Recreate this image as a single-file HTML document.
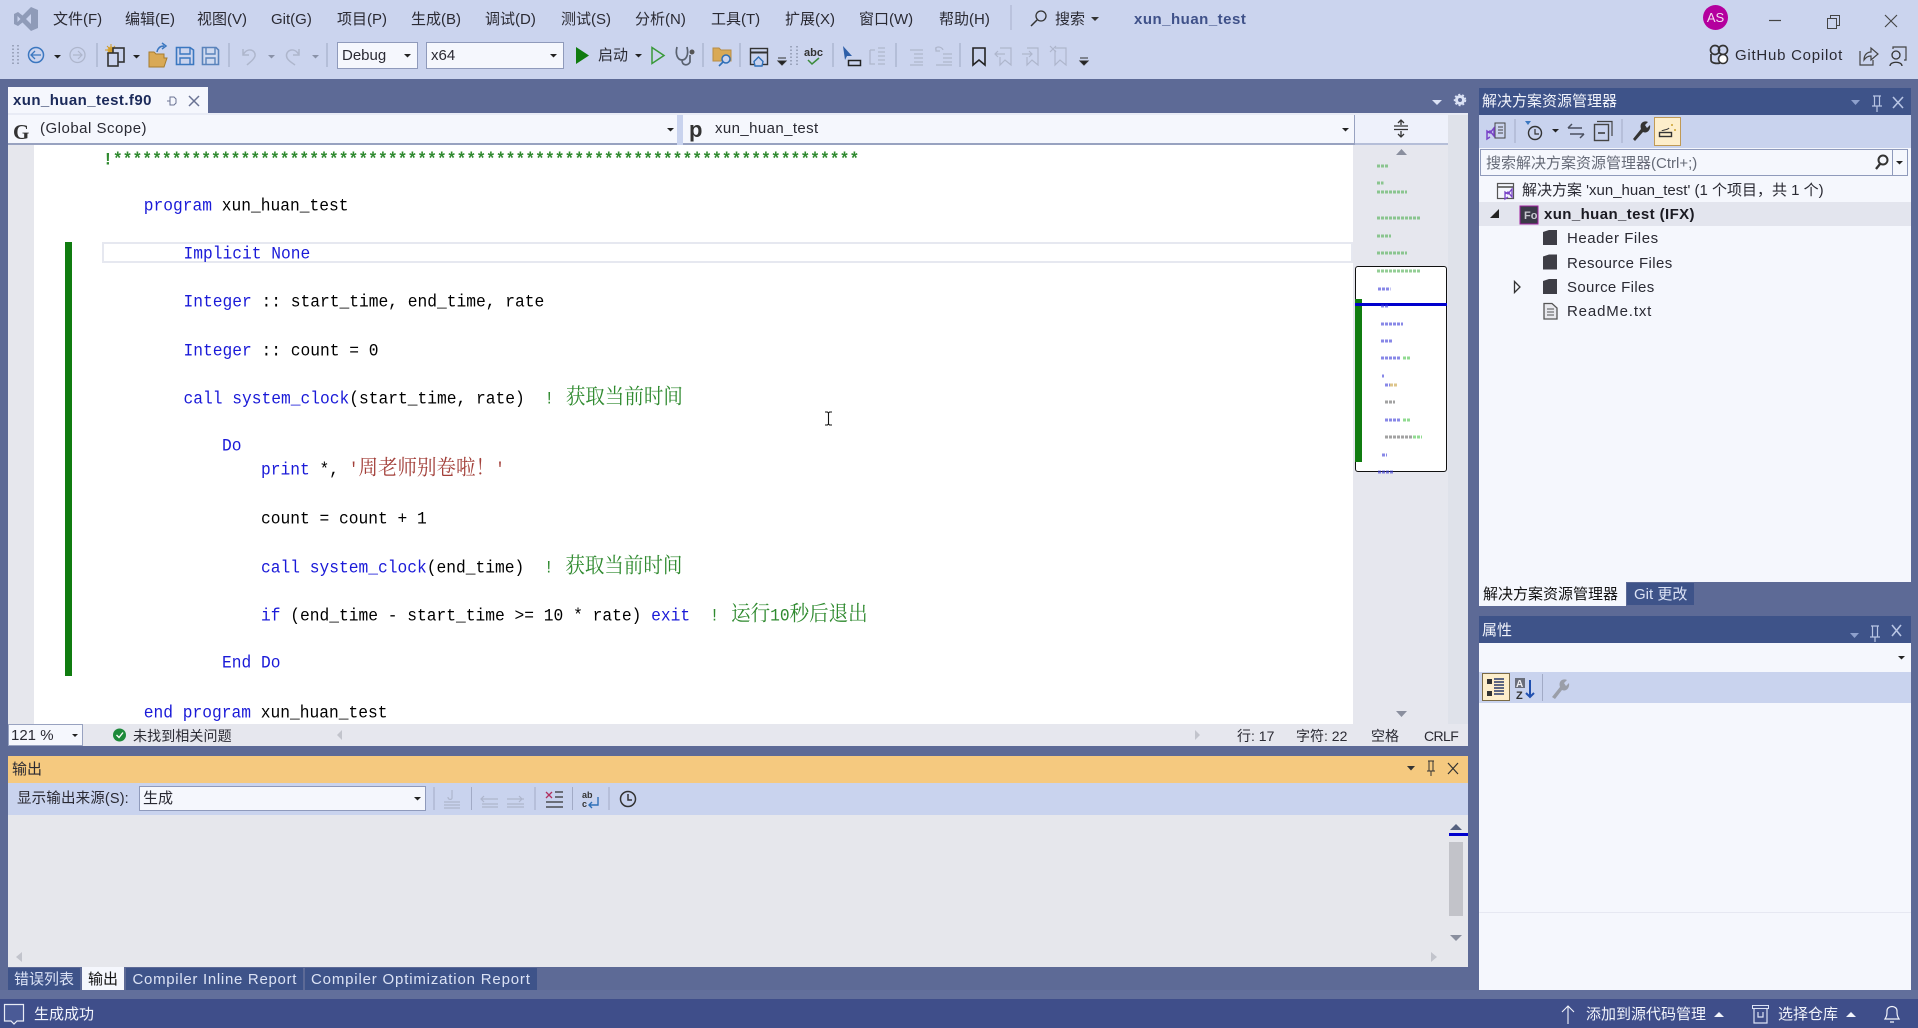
<!DOCTYPE html>
<html lang="zh"><head><meta charset="utf-8"><title>xun_huan_test</title>
<style>
html,body{margin:0;padding:0}
body{width:1918px;height:1028px;position:relative;overflow:hidden;background:#5d6a96;font-family:"Liberation Sans","Noto Sans CJK SC",sans-serif;font-size:15px;color:#222;filter:blur(.3px)}
.b{position:absolute}
.t{position:absolute;white-space:pre;height:20px;line-height:20px;color:#2a2a33}
.c{position:absolute;white-space:pre;height:24px;line-height:24px;font-family:"Liberation Mono","Noto Serif CJK SC",monospace;font-size:16.25px;color:#000;transform:scaleY(1.08)}
.c .k{color:#1a1ad8}.c .g{color:#2f8a2f}.c .s{color:#a3403a}
.c i{font-style:normal;font-family:"Noto Serif CJK SC",serif;font-size:19.5px;line-height:20px}
.c .g i{margin-left:2px}
svg{position:absolute;left:0;top:0}
</style></head><body>
<!-- regions -->
<div class="b" style="left:0;top:0;width:1918px;height:79px;background:#cbd4ee"></div>
<div class="b" style="left:0;top:990px;width:1918px;height:9px;background:#626f9b"></div>
<div class="b" style="left:0;top:999px;width:1918px;height:29px;background:#3f4e8a"></div>
<!-- editor -->
<div class="b" style="left:8px;top:87px;width:200px;height:26px;background:#f5f7fd"></div>
<div class="b" style="left:8px;top:113px;width:1460px;height:2px;background:#e8ebf5"></div>
<div class="b" style="left:8px;top:115px;width:669px;height:28px;background:#f5f7fd;border-bottom:2px solid #98a2c0;box-sizing:content-box"></div>
<div class="b" style="left:677px;top:115px;width:6px;height:30px;background:#c9d3ee"></div>
<div class="b" style="left:683px;top:115px;width:671px;height:28px;background:#f5f7fd;border-bottom:2px solid #98a2c0;border-right:1px solid #98a2c0"></div>
<div class="b" style="left:1355px;top:115px;width:93px;height:28px;background:#eef1fb;border-bottom:2px solid #b5bed8"></div>
<div class="b" style="left:1448px;top:115px;width:20px;height:631px;background:#dfe2ea"></div>
<div class="b" style="left:8px;top:145px;width:1347px;height:579px;background:#fff"></div>
<div class="b" style="left:8px;top:145px;width:26px;height:579px;background:#e6e7ed"></div>
<div class="b" style="left:1353px;top:145px;width:95px;height:579px;background:#e6e7ee"></div>
<div class="b" style="left:65px;top:242px;width:7px;height:434px;background:#107c10"></div>
<div class="b" style="left:102px;top:242px;width:1251px;height:21px;border:2px solid #e6e8f0;box-sizing:border-box"></div>
<!-- editor status -->
<div class="b" style="left:8px;top:724px;width:1460px;height:22px;background:#e6e7ee"></div>
<div class="b" style="left:8px;top:724px;width:75px;height:22px;background:#f5f7fd;border:1px solid #98a2c0;box-sizing:border-box"></div>
<!-- scroll map box -->
<div class="b" style="left:1355px;top:266px;width:92px;height:206px;background:#fff;border:1.5px solid #111;border-radius:3px;box-sizing:border-box"></div>
<div class="b" style="left:1355px;top:299px;width:7px;height:163px;background:#107c10"></div>
<div class="b" style="left:1355px;top:303px;width:92px;height:3px;background:#0000cd"></div>
<!-- output -->
<div class="b" style="left:8px;top:756px;width:1460px;height:27px;background:#f5c97f"></div>
<div class="b" style="left:8px;top:783px;width:1460px;height:32px;background:#c9d3ee"></div>
<div class="b" style="left:8px;top:815px;width:1460px;height:152px;background:#e6e7ec"></div>
<div class="b" style="left:139px;top:786px;width:287px;height:25px;background:#f5f7fd;border:1px solid #8f9abb;box-sizing:border-box"></div>
<div class="b" style="left:1449px;top:842px;width:14px;height:74px;background:#c2c3c9"></div>
<div class="b" style="left:1449px;top:833px;width:19px;height:3px;background:#0000cd"></div>
<!-- bottom tabs -->
<div class="b" style="left:8px;top:968px;width:72px;height:22px;background:#3e5389"></div>
<div class="b" style="left:82px;top:967px;width:42px;height:23px;background:#f5f7fd"></div>
<div class="b" style="left:126px;top:968px;width:177px;height:22px;background:#3e5389"></div>
<div class="b" style="left:305px;top:968px;width:232px;height:22px;background:#3e5389"></div>
<!-- toolbar combos -->
<div class="b" style="left:337px;top:42px;width:81px;height:27px;background:#f5f7fd;border:1px solid #8f9abb;box-sizing:border-box"></div>
<div class="b" style="left:426px;top:42px;width:138px;height:27px;background:#f5f7fd;border:1px solid #8f9abb;box-sizing:border-box"></div>
<!-- solution explorer -->
<div class="b" style="left:1479px;top:88px;width:432px;height:27px;background:#3e5389"></div>
<div class="b" style="left:1479px;top:115px;width:432px;height:33px;background:#c9d3ee"></div>
<div class="b" style="left:1479px;top:148px;width:432px;height:434px;background:#f5f7fd"></div>
<div class="b" style="left:1480px;top:149px;width:428px;height:27px;background:#f5f7fd;border:1px solid #8f9abb;box-sizing:border-box"></div>
<div class="b" style="left:1892px;top:149px;width:1px;height:27px;background:#8f9abb"></div>
<div class="b" style="left:1479px;top:202px;width:432px;height:24px;background:#e3e5ee"></div>
<div class="b" style="left:1654px;top:117px;width:27px;height:29px;background:#fdeecb;border:1px solid #c09a55;box-sizing:border-box"></div>
<div class="b" style="left:1479px;top:582px;width:147px;height:24px;background:#f5f7fd"></div>
<div class="b" style="left:1627px;top:583px;width:67px;height:22px;background:#3e5389"></div>
<!-- properties -->
<div class="b" style="left:1479px;top:616px;width:432px;height:27px;background:#3e5389"></div>
<div class="b" style="left:1479px;top:643px;width:432px;height:347px;background:#f5f7fd"></div>
<div class="b" style="left:1479px;top:672px;width:432px;height:31px;background:#c9d3ee"></div>
<div class="b" style="left:1479px;top:912px;width:432px;height:1px;background:#e6e8f2"></div>
<div class="b" style="left:1482px;top:673px;width:28px;height:28px;background:#fdeecb;border:1px solid #7a6a45;box-sizing:border-box"></div>

<!-- menu -->
<div class="t" style="left:53px;top:10px">文件(F)</div>
<div class="t" style="left:125px;top:10px">编辑(E)</div>
<div class="t" style="left:197px;top:10px">视图(V)</div>
<div class="t" style="left:271px;top:10px">Git(G)</div>
<div class="t" style="left:337px;top:10px">项目(P)</div>
<div class="t" style="left:411px;top:10px">生成(B)</div>
<div class="t" style="left:485px;top:10px">调试(D)</div>
<div class="t" style="left:561px;top:10px">测试(S)</div>
<div class="t" style="left:635px;top:10px">分析(N)</div>
<div class="t" style="left:711px;top:10px">工具(T)</div>
<div class="t" style="left:785px;top:10px">扩展(X)</div>
<div class="t" style="left:859px;top:10px">窗口(W)</div>
<div class="t" style="left:939px;top:10px">帮助(H)</div>
<div class="t" style="left:1055px;top:10px">搜索</div>
<div class="t" style="left:1134px;top:10px;font-weight:700;color:#3f5189;letter-spacing:.5px;font-size:15px">xun_huan_test</div>
<div class="b" style="left:1703px;top:5px;width:25px;height:25px;border-radius:50%;background:#b4009e;color:#f4e0f0;font-size:13px;line-height:25px;text-align:center">AS</div>
<div class="t" style="left:342px;top:46px">Debug</div>
<div class="t" style="left:431px;top:46px">x64</div>
<div class="t" style="left:598px;top:46px">启动</div>
<div class="t" style="left:1735px;top:46px;letter-spacing:.75px">GitHub Copilot</div>
<!-- tab + nav -->
<div class="t" style="left:13px;top:91px;font-weight:700;color:#1b2a5a;letter-spacing:.42px">xun_huan_test.f90</div>
<div class="b" style="left:13px;top:120px;font:700 21px/24px 'Liberation Serif',serif;color:#333">G</div>
<div class="t" style="left:40px;top:119px;letter-spacing:.5px">(Global Scope)</div>
<div class="b" style="left:689px;top:117px;font:700 22px/26px 'Liberation Sans',sans-serif;color:#333">p</div>
<div class="t" style="left:715px;top:119px;letter-spacing:.4px">xun_huan_test</div>

<!-- code -->
<div class="c" style="left:103px;top:148px;letter-spacing:.07px;font-weight:700"><span class="g">!****************************************************************************</span></div>
<div class="c" style="left:143.7px;top:194px"><span class="k">program</span> xun_huan_test</div>
<div class="c" style="left:183.5px;top:242px"><span class="k">Implicit None</span></div>
<div class="c" style="left:183.5px;top:290px"><span class="k">Integer</span> :: start_time, end_time, rate</div>
<div class="c" style="left:183.5px;top:339px"><span class="k">Integer</span> :: count = 0</div>
<div class="c" style="left:183.5px;top:385px"><span class="k">call system_clock</span>(start_time, rate)  <span class="g">! <i>获取当前时间</i></span></div>
<div class="c" style="left:222px;top:434px"><span class="k">Do</span></div>
<div class="c" style="left:261px;top:456px"><span class="k">print</span> *, <span class="s">'<i>周老师别卷啦！</i>'</span></div>
<div class="c" style="left:261px;top:507px">count = count + 1</div>
<div class="c" style="left:261px;top:554px"><span class="k">call system_clock</span>(end_time)  <span class="g">! <i>获取当前时间</i></span></div>
<div class="c" style="left:261px;top:602px"><span class="k">if</span> (end_time - start_time &gt;= 10 * rate) <span class="k">exit</span>  <span class="g">! <i>运行</i>10<i style="margin-left:0">秒后退出</i></span></div>
<div class="c" style="left:222px;top:651px"><span class="k">End Do</span></div>
<div class="c" style="left:143.7px;top:701px"><span class="k">end program</span> xun_huan_test</div>

<!-- editor status -->
<div class="t" style="left:11px;top:726px">121 %</div>
<div class="t" style="left:133px;top:726px;font-size:14px;letter-spacing:.1px">未找到相关问题</div>
<div class="t" style="left:1237px;top:726px;font-size:14px">行: 17</div>
<div class="t" style="left:1296px;top:726px;font-size:14px">字符: 22</div>
<div class="t" style="left:1371px;top:726px;font-size:14px">空格</div>
<div class="t" style="left:1424px;top:726px;font-size:14px;letter-spacing:-.6px">CRLF</div>
<!-- output text -->
<div class="t" style="left:12px;top:760px">输出</div>
<div class="t" style="left:17px;top:789px;font-size:14.5px;letter-spacing:.15px">显示输出来源(S):</div>
<div class="t" style="left:143px;top:789px">生成</div>
<!-- tabs text -->
<div class="t" style="left:14px;top:970px;color:#dbe2f5">错误列表</div>
<div class="t" style="left:88px;top:970px;color:#111">输出</div>
<div class="t" style="left:132.5px;top:970px;color:#dbe2f5;letter-spacing:.7px">Compiler Inline Report</div>
<div class="t" style="left:311px;top:970px;color:#dbe2f5;letter-spacing:.82px">Compiler Optimization Report</div>
<!-- status -->
<div class="t" style="left:34px;top:1005px;color:#f2f4fb">生成成功</div>
<div class="t" style="left:1586px;top:1005px;color:#f2f4fb">添加到源代码管理</div>
<div class="t" style="left:1778px;top:1005px;color:#f2f4fb">选择仓库</div>
<!-- solution explorer text -->
<div class="t" style="left:1482px;top:92px;color:#f2f4fb">解决方案资源管理器</div>
<div class="t" style="left:1486px;top:154px;color:#666b78;font-size:15px">搜索解决方案资源管理器(Ctrl+;)</div>
<div class="t" style="left:1522px;top:181px">解决方案 'xun_huan_test' (1 个项目，共 1 个)</div>
<div class="t" style="left:1544px;top:205px;font-weight:700;color:#1a1a22;letter-spacing:.4px">xun_huan_test (IFX)</div>
<div class="t" style="left:1567px;top:229px;letter-spacing:.55px">Header Files</div>
<div class="t" style="left:1567px;top:254px;letter-spacing:.4px">Resource Files</div>
<div class="t" style="left:1567px;top:278px;letter-spacing:.35px">Source Files</div>
<div class="t" style="left:1567px;top:302px;letter-spacing:.85px">ReadMe.txt</div>
<div class="t" style="left:1483px;top:585px;color:#111">解决方案资源管理器</div>
<div class="t" style="left:1634px;top:585px;color:#dbe2f5">Git 更改</div>
<div class="t" style="left:1482px;top:621px;color:#f2f4fb">属性</div>

<svg width="1918" height="1028" viewBox="0 0 1918 1028" fill="none">
<!-- VS logo -->
<path d="M31 7L38 10V28L31 31L22.5 22.5L18 26L14 24V14L18 12L22.5 15.5Z" fill="#8f9bb8"/>
<path d="M31 14L26 19L31 24Z" fill="#cbd4ee"/><path d="M17.5 16V22L20.5 19Z" fill="#cbd4ee"/>
<!-- menu sep + search -->
<path d="M1011 5V30" stroke="#a8b1cc"/>
<circle cx="1041" cy="16" r="5" stroke="#333" stroke-width="1.3"/><path d="M1037 20L1031 26" stroke="#333" stroke-width="1.5"/>
<path d="M1091 17h8l-4 4z" fill="#333"/>
<!-- window controls -->
<path d="M1769 20.5H1781" stroke="#444" stroke-width="1.2"/>
<rect x="1827.5" y="18.5" width="9" height="10" stroke="#444"/><path d="M1830.5 18.5V15.5H1839.5V25.5H1836.5" stroke="#444"/>
<path d="M1885 15L1897 27M1897 15L1885 27" stroke="#444" stroke-width="1.1"/>
<!-- toolbar grip -->
<path d="M13 45V66M18 45V66" stroke="#8b93ab" stroke-width="1.5" stroke-dasharray="1.5 2"/>
<circle cx="36" cy="55" r="7.5" stroke="#3b77c0" stroke-width="1.5"/><path d="M41 55H31M35 51L31 55L35 59" stroke="#3b77c0" stroke-width="1.3"/>
<path d="M54 55h7l-3.5 3.5z" fill="#222"/>
<circle cx="77.5" cy="55" r="7.5" stroke="#aeb6cc" stroke-width="1.3"/><path d="M73 55H82M78 51L82 55L78 59" stroke="#aeb6cc" stroke-width="1.2"/>
<path d="M97 43V67" stroke="#9ea7c2"/>
<!-- new project -->
<circle cx="111" cy="50" r="3.5" fill="#e0b040"/><path d="M111 44V56M105 50H117M107 46L115 54M115 46L107 54" stroke="#d09a28"/>
<rect x="113" y="48" width="11" height="14" fill="#cbd4ee" stroke="#333" stroke-width="1.6"/><rect x="108" y="53" width="10" height="13" fill="#cbd4ee" stroke="#333" stroke-width="1.6"/>
<path d="M133 55h7l-3.5 3.5z" fill="#222"/>
<!-- open folder -->
<path d="M149 52h5l2 2h8v4h3l-3 9h-15z" fill="#d9a955" stroke="#a67c2e"/><path d="M157 52c1-5 4-6 7-6M162 43l4 3-4 3" stroke="#3b77c0" stroke-width="1.5"/>
<!-- save -->
<path d="M176.5 47.5H190L193.5 50V64.5H176.5Z" stroke="#3b77c0" stroke-width="1.6"/><path d="M180 48V54H190V48M180 64V58H190V64" stroke="#3b77c0" stroke-width="1.4"/>
<path d="M202.5 47.5H216L218.5 50V64.5H202.5Z" stroke="#5a83bb" stroke-width="1.6" fill="#cfdaf0"/><path d="M206 48V54H215V48M206 64V58H215V64" stroke="#5a83bb" stroke-width="1.4"/>
<path d="M229 43V67" stroke="#9ea7c2"/>
<!-- undo redo -->
<path d="M243 49V55H249M243.5 54C248 47 256 50 255 56C254 60 250 62 247 65" stroke="#aeb6cc" stroke-width="1.5"/>
<path d="M268 55h7l-3.5 3.5z" fill="#8a92a8"/>
<path d="M299 49V55H293M298.5 54C294 47 286 50 286.5 56C287 60 291 62 295 65" stroke="#aeb6cc" stroke-width="1.5"/>
<path d="M312 55h7l-3.5 3.5z" fill="#8a92a8"/>
<path d="M327 43V67" stroke="#9ea7c2"/>
<!-- combo arrows -->
<path d="M404 54h7l-3.5 3.5z" fill="#222"/><path d="M550 54h7l-3.5 3.5z" fill="#222"/>
<!-- play -->
<path d="M576 47L589 55.5L576 64Z" fill="#0f7b0f"/>
<path d="M635 54h7l-3.5 3.5z" fill="#222"/>
<path d="M652 47.5L664 55.5L652 63.5Z" stroke="#3a9a3a" stroke-width="1.5"/>
<path d="M677 47C675 55 678 60 682 60S689 55 687 47M682 60C682 66 688 66 690 62V55" stroke="#5a6270" stroke-width="1.7"/><circle cx="692" cy="52" r="2.5" fill="#555"/>
<path d="M703 43V67" stroke="#9ea7c2"/>
<!-- folder search -->
<path d="M713 48h6l2 2h10v11h-18z" fill="#d9a955" stroke="#b78d45"/><circle cx="726" cy="59" r="4" fill="#cbd4ee" stroke="#2e6fb7" stroke-width="1.5"/><path d="M723 62L719 66" stroke="#2e6fb7" stroke-width="1.6"/>
<path d="M740 43V67" stroke="#9ea7c2"/>
<!-- window home -->
<rect x="750.5" y="48.5" width="17" height="16" stroke="#333" stroke-width="1.4"/><path d="M751 52.5H767" stroke="#333" stroke-width="2"/>
<path d="M754 61.5L755 66H762L763 61.5L758.5 57Z" fill="#cbd4ee" stroke="#2e6fb7" stroke-width="1.4"/>
<path d="M778 58h8M778 61h8l-4 4z" stroke="#333" fill="#222"/>
<path d="M791 46V66M797 46V66" stroke="#8b93ab" stroke-width="1.5" stroke-dasharray="1.5 2"/>
<text x="804" y="56" font-family="Liberation Sans" font-size="11" font-weight="700" fill="#333">abc</text>
<path d="M808 60L812 64L819 58" stroke="#3a8a3a" stroke-width="1.5"/>
<path d="M833 43V67" stroke="#9ea7c2"/>
<path d="M843 46L852 56H847L845 60Z" fill="#2e5fa8"/><rect x="848.5" y="60.5" width="12" height="5" stroke="#222" stroke-width="1.5"/>
<path d="M870 50H875M870 50V64H875M878 48H885M878 52H885M878 56H885M878 60H885M878 64H885" stroke="#aeb6cc" stroke-width="1.3"/>
<path d="M896 43V67" stroke="#9ea7c2"/>
<path d="M910 50H923M914 54H923M914 58H923M914 62H923M910 65H923" stroke="#aeb6cc" stroke-width="1.2"/>
<path d="M936 50C934 46 942 46 943 50M936 47V51H940M943 54H952M943 58H952M943 62H952M936 65H952" stroke="#aeb6cc" stroke-width="1.2"/>
<path d="M960 43V67" stroke="#9ea7c2"/>
<path d="M973 48H985V65L979 60L973 65Z" fill="#cbd4ee" stroke="#222" stroke-width="1.6"/>
<path d="M1000 48H1011V65L1005 60L1000 65V57M1005 54H995M998 51L995 54L998 57" stroke="#aeb6cc" stroke-width="1.2"/>
<path d="M1027 48H1038V65L1032 60L1027 65V57M1022 54H1032M1029 51L1032 54L1029 57" stroke="#aeb6cc" stroke-width="1.2"/>
<path d="M1055 48H1066V65L1060 60L1055 65V50M1050 46L1056 52M1056 46L1050 52" stroke="#aeb6cc" stroke-width="1.2"/>
<path d="M1080 58h8M1080 61h8l-4 4z" stroke="#333" fill="#222"/>
<!-- copilot -->
<circle cx="1715" cy="50" r="4.5" stroke="#333" stroke-width="1.7"/><circle cx="1723" cy="50" r="4.5" stroke="#333" stroke-width="1.7"/><path d="M1711 54V60C1711 63 1716 64 1720 63" stroke="#333" stroke-width="1.7"/><circle cx="1723" cy="59" r="4.5" fill="#fff" stroke="#333" stroke-width="1.6"/>
<!-- share -->
<path d="M1860 51V65H1873V60" stroke="#444" stroke-width="1.2"/><path d="M1864 60C1864 54 1868 52 1871 52V48L1878 54L1871 60V56C1868 56 1866 57 1864 60Z" stroke="#444" stroke-width="1.2"/>
<!-- feedback -->
<path d="M1893 49V47H1906V60H1904" stroke="#444" stroke-width="1.2"/><circle cx="1896" cy="55" r="4" stroke="#333" stroke-width="1.3"/><path d="M1890 66C1890 61 1902 61 1902 66" stroke="#333" stroke-width="1.3"/>
<!-- tab pin & x -->
<path d="M167 101H170M170 97V105H174L176 103V99L174 97Z" stroke="#6a7394"/>
<path d="M189 96L199 106M199 96L189 106" stroke="#6a7394" stroke-width="1.5"/>
<!-- doc well dropdown/gear -->
<path d="M1432 100h10l-5 5z" fill="#dbe2f5"/>
<circle cx="1460" cy="100" r="3.5" stroke="#dbe2f5" stroke-width="3"/><circle cx="1460" cy="100" r="5.5" stroke="#dbe2f5" stroke-width="1.5" stroke-dasharray="2 2"/>
<!-- nav arrows -->
<path d="M667 128h7l-3.5 3.5z" fill="#222"/><path d="M1342 128h7l-3.5 3.5z" fill="#222"/>
<path d="M1394 129.5H1408M1394 126H1408" stroke="#333" stroke-width="1.3"/><path d="M1401 121V125M1401 131V137M1398 123L1401 120L1404 123M1398 134L1401 137L1404 134" stroke="#333" stroke-width="1.3"/>
<!-- scroll arrows -->
<path d="M1396 155L1401.5 149L1407 155Z" fill="#8a8f9e"/><path d="M1396 711L1401.5 717L1407 711Z" fill="#8a8f9e"/>
<path d="M1450 830L1456 824L1462 830Z" fill="#55617f"/><path d="M1450 935L1456 941L1462 935Z" fill="#8a8f9e"/>
<path d="M22 952L16 957L22 962Z" fill="#c2c4cc"/><path d="M1431 952L1437 957L1431 962Z" fill="#c2c4cc"/>
<path d="M342 730L337 735L342 740Z" fill="#c2c4cc"/><path d="M1195 730L1200 735L1195 740Z" fill="#c2c4cc"/>
<!-- zoom combo arrow & check -->
<path d="M72 734h6l-3 3z" fill="#222"/>
<circle cx="119.5" cy="735" r="6.5" fill="#1d8a3a"/><path d="M116.5 735L119 737.5L123 732.5" stroke="#fff" stroke-width="1.4"/>
<!-- minimap -->
<g stroke-width="3" opacity=".6" stroke-dasharray="3 1">
<path d="M1377 166H1388M1377 183H1383.5M1377 192H1407M1377 218H1421M1377 236H1391M1377 253H1407M1377 271H1421" stroke="#4caf50"/>
<path d="M1378 289H1390.5M1381 306H1388M1381 324H1403M1381 341H1393M1381 358H1401M1382 376H1384M1385 385H1390M1385 420H1401M1382 455H1387M1378 472H1393" stroke="#3a3ad8"/>
<path d="M1403 358H1411M1403 420H1411M1413 437H1422" stroke="#49c449"/>
<path d="M1390 385H1398" stroke="#c8a040"/>
<path d="M1385 402H1395M1385 437H1412" stroke="#666"/>
</g>
<!-- output header icons -->
<path d="M1407 766h8l-4 4.5z" fill="#333"/>
<path d="M1428 761H1434M1429 761V771H1433V761M1431 771V776M1427 771H1435" stroke="#333"/>
<path d="M1448 763L1458 774M1458 763L1448 774" stroke="#333" stroke-width="1.2"/>
<path d="M414 797h7l-3.5 3.5z" fill="#222"/>
<!-- output toolbar -->
<path d="M434 787V810M471.5 787V810M535 787V810M572.5 787V810M609 787V810" stroke="#a2abc6"/>
<path d="M452 790V798C452 800 448 800 448 797M444 802H460M444 805H460M444 808H460" stroke="#aeb6cc" stroke-width="1.2"/>
<path d="M484 796L481 799L484 802M481 799H498M482 804H498M482 807H498" stroke="#aeb6cc" stroke-width="1.2"/>
<path d="M519 796L522 799L519 802M524 799H507M507 804H524M507 807H524" stroke="#aeb6cc" stroke-width="1.2"/>
<path d="M546 792L552 798M552 792L546 798" stroke="#b03060" stroke-width="1.3"/><path d="M555 792H563M555 797H563M546 802H563M546 807H563" stroke="#333" stroke-width="1.3"/>
<text x="582" y="798" font-family="Liberation Sans" font-size="9" font-weight="700" fill="#333">ab</text><text x="582" y="807" font-family="Liberation Sans" font-size="9" font-weight="700" fill="#333">c</text>
<path d="M598 797V805H589M592 802L589 805L592 808" stroke="#2e6fb7" stroke-width="1.4"/>
<circle cx="628" cy="799" r="7.5" stroke="#333" stroke-width="1.5"/><path d="M628 794V800H632" stroke="#333" stroke-width="1.5"/>
<!-- solution explorer title icons -->
<path d="M1851 100h9l-4.5 5z" fill="#8ea0cc"/>
<path d="M1873 96H1881M1874.5 96V106H1879.5V96M1877 106V112M1872 106H1882" stroke="#b8c5e4" stroke-width="1.2"/>
<path d="M1893 97L1903 108M1903 97L1893 108" stroke="#b8c5e4" stroke-width="1.6"/>
<!-- se toolbar -->
<path d="M1515 119V143M1622 119V143" stroke="#a2abc6"/>
<rect x="1495" y="123" width="10" height="15" stroke="#444" fill="#cbd4ee"/><path d="M1498 127H1503M1498 130H1503M1498 133H1503" stroke="#444"/>
<path d="M1487 133L1490 131L1494 136V128L1490 133L1487 131V139L1490 137" stroke="#7a45c8" stroke-width="1.5"/>
<path d="M1525 121H1531L1528 125Z" fill="#3b77c0"/><circle cx="1535" cy="133" r="6.5" stroke="#333" stroke-width="1.4"/><path d="M1535 129V134H1539" stroke="#333" stroke-width="1.2"/>
<path d="M1552 129h7l-3.5 3.5z" fill="#222"/>
<path d="M1568 128H1582M1568 128L1572 124M1584 134H1570M1584 134L1580 138" stroke="#4a5060" stroke-width="1.5"/>
<rect x="1594.5" y="124.5" width="14" height="16" stroke="#444" stroke-width="1.4"/><path d="M1597 121.5H1612V136" stroke="#444" stroke-width="1.2"/><path d="M1598 133H1605" stroke="#333" stroke-width="1.5"/>
<path d="M1633 139L1641 129C1639 123 1644 120 1648 122L1645 125L1647 128L1650 125C1651 130 1647 134 1643 132L1635 141Z" fill="#333"/>
<rect x="1659.5" y="132.5" width="12" height="4" stroke="#333" stroke-width="1.4"/><path d="M1662 131C1662 130 1668 130 1669 128" stroke="#333"/>
<circle cx="1672" cy="125" r="1" fill="#c9a030"/><circle cx="1675" cy="130" r="1" fill="#c9a030"/>
<!-- search icon -->
<circle cx="1883" cy="160" r="4.5" stroke="#333" stroke-width="2"/><path d="M1880 164L1876 169" stroke="#333" stroke-width="2.3"/>
<path d="M1896 161h7l-3.5 3.5z" fill="#222"/>
<!-- solution icon -->
<rect x="1497.5" y="183.5" width="16" height="15" stroke="#555" stroke-width="1.2"/><path d="M1498 187H1513" stroke="#555" stroke-width="1.6"/>
<path d="M1505 194L1508 192L1512 197V189L1508 194L1505 192V199L1508 197" stroke="#7a45c8" stroke-width="1.3"/>
<!-- tree -->
<path d="M1499 209V218H1490Z" fill="#222"/>
<rect x="1520" y="206" width="18" height="18" fill="#3a3a48" stroke="#a020a0"/>
<text x="1524" y="219" font-family="Liberation Sans" font-size="11" font-weight="700" fill="#c8c8d0">Fo</text>
<path d="M1543 232L1549 230H1557V245H1543Z" fill="#3e3e46"/>
<path d="M1543 256.5L1549 254.5H1557V269.5H1543Z" fill="#3e3e46"/>
<path d="M1543 281L1549 279H1557V294H1543Z" fill="#3e3e46"/>
<path d="M1514.5 281.5L1520 287L1514.5 292.5Z" stroke="#333" stroke-width="1.3"/>
<path d="M1544 303.5H1552L1557 308V319H1544Z" fill="#e8e9ee" stroke="#555" stroke-width="1.3"/><path d="M1547 309H1554M1547 312H1554M1547 315H1554" stroke="#555"/>
<!-- properties -->
<path d="M1850 633h9l-4.5 5z" fill="#8ea0cc"/>
<path d="M1871 626H1879M1872.5 626V637H1877.5V626M1875 637V642M1870 637H1880" stroke="#b8c5e4" stroke-width="1.2"/>
<path d="M1892 625L1901 636M1901 625L1892 636" stroke="#b8c5e4" stroke-width="1.6"/>
<path d="M1898 656h7l-3.5 3.5z" fill="#222"/>
<path d="M1487 679h5v5h-5zM1487 691h5v5h-5z" fill="#333"/><path d="M1494 679H1504M1494 682H1504M1494 685H1504M1494 688H1504M1494 691H1504M1494 694H1504" stroke="#2a3a6a" stroke-width="1.4"/>
<rect x="1515" y="678" width="10" height="10" fill="#6a6e7a"/><text x="1516" y="687" font-family="Liberation Sans" font-size="10" font-weight="700" fill="#f0f0f5">A</text>
<text x="1516" y="699" font-family="Liberation Sans" font-size="11" font-weight="700" fill="#333">Z</text>
<path d="M1530 680V697M1526 693L1530 697L1534 693" stroke="#2050b0" stroke-width="2"/>
<path d="M1542.5 674V701" stroke="#a2abc6"/>
<path d="M1552 697L1560 687C1558 681 1563 678 1567 680L1564 683L1566 686L1569 683C1570 688 1566 692 1562 690L1555 699Z" fill="#9a9ea8"/>
<!-- status bar icons -->
<path d="M4.5 1004.5H23.5V1021H17L14 1024L11 1021H4.5Z" stroke="#e8ebf5" stroke-width="1.2" fill="#4a5a96"/>
<path d="M1568 1024V1006M1562 1012L1568 1006L1574 1012" stroke="#f2f4fb" stroke-width="1.1"/>
<path d="M1714 1017h10l-5-5z" fill="#f2f4fb"/>
<rect x="1752.5" y="1005.5" width="16" height="3" stroke="#dbe2f5"/><path d="M1754 1009V1023H1767V1009M1758 1012V1017H1763V1012" stroke="#dbe2f5" stroke-width="1.2"/>
<path d="M1846 1017h10l-5-5z" fill="#f2f4fb"/>
<path d="M1885 1019H1899C1897 1016 1897 1014 1897 1011C1897 1005 1887 1005 1887 1011C1887 1014 1887 1016 1885 1019ZM1890 1022H1894" stroke="#f2f4fb" stroke-width="1.2"/>
<!-- I beam -->
<path d="M825 412H827.5L828.5 413L829.5 412H832M828.5 413V424M825 425H827.5L828.5 424L829.5 425H832" stroke="#111" stroke-width="1.1"/>
</svg>
</body></html>
